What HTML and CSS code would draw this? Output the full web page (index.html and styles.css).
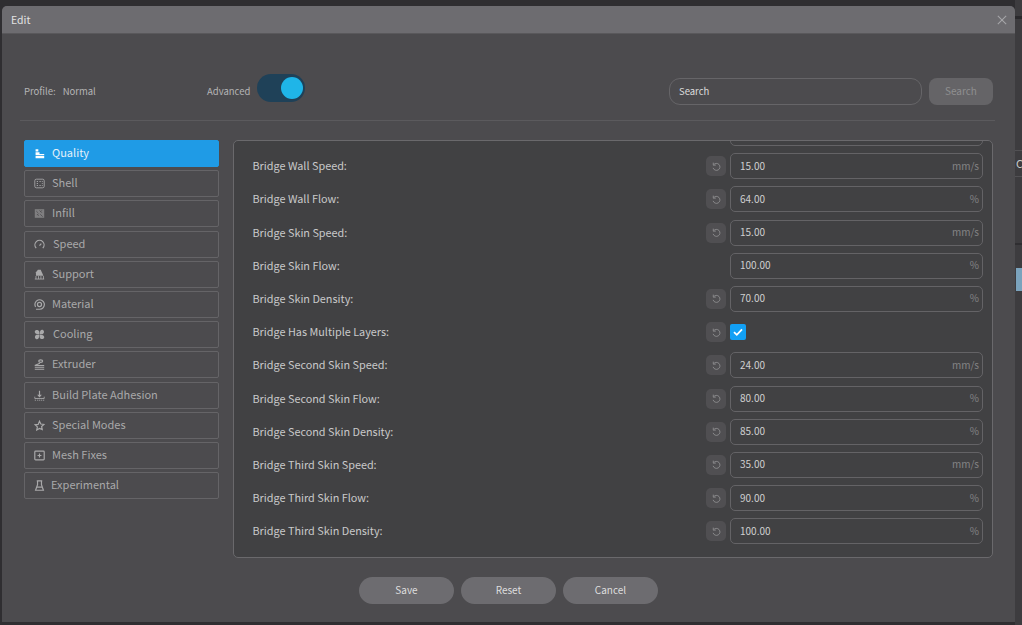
FILE: index.html
```html
<!DOCTYPE html>
<html lang="en">
<head>
<meta charset="utf-8">
<title>Edit</title>
<link rel="stylesheet" href="styles.css">
</head>
<body>
<div class="backdrop">
  <div class="side-peek"><span class="peek-letter">C</span><span class="peek-blue"></span></div>
  <div class="dialog">
    <div class="titlebar">
      <span class="title">Edit</span>
      <svg class="close" viewBox="0 0 12 12"><path d="M1 1l10 10M11 1L1 11"/></svg>
    </div>
    <div class="body">
      <div class="top">
        <div class="profile"><span>Profile:</span><span>Normal</span></div>
        <div class="advanced"><span>Advanced</span><span class="toggle"><span class="knob"></span></span></div>
        <div class="search"><div class="search-input">Search</div><div class="search-btn">Search</div></div>
      </div>
      <div class="divider"></div>
      <div class="main">
        <nav class="nav">
          <div class="nav-item active"><svg class="ico" viewBox="0 0 14 14"><path class="fill" d="M2 1.500h3.500v3H2zM2 5.500h5v2h6v1.500H2zM2 10h11v3H2z"/></svg><span>Quality</span></div>
          <div class="nav-item"><svg class="ico" viewBox="0 0 14 14"><rect class="line" x="1" y="1.500" width="12" height="11" rx="2"/><path class="dots" d="M3.500 4.500h1.500M3.500 7h1.500M3.500 9.500h1.500M7 4.500h1.500M10 4.500h1M10 7h1M10 9.500h1M7 9.500h1.500"/></svg><span>Shell</span></div>
          <div class="nav-item"><svg class="ico" viewBox="0 0 14 14"><rect class="fill dim" x="1" y="1.500" width="12" height="11"/><path class="hatch" d="M3 4l2 2M7 3l3 3M4 8l2 2M8 8l3 3M10 3l-2 2M6 7l-2 2"/></svg><span>Infill</span></div>
          <div class="nav-item"><svg class="ico" viewBox="0 0 14 14"><path class="line thick" d="M2.800 11.500a5.800 5.800 0 1 1 8.400 0"/><path class="line thick" d="M7 8.500l2.300-2.600"/></svg><span class="nudge">Speed</span></div>
          <div class="nav-item"><svg class="ico" viewBox="0 0 14 14"><path class="fill" d="M2.500 8.500V4L5 1h3.500L12 8.500z"/><path class="line" d="M1 12.800h12M2.500 9v3.800M5.800 9v3.800M8.800 9v3.800M12 9v3.800"/></svg><span>Support</span></div>
          <div class="nav-item"><svg class="ico" viewBox="0 0 14 14"><path class="line thick" d="M2.500 13h4.700A6 6 0 1 0 2 10"/><circle class="line thick" cx="7" cy="7" r="2.600"/></svg><span>Material</span></div>
          <div class="nav-item"><svg class="ico" viewBox="0 0 14 14"><path class="fill" d="M6.700 6.700C3 7 .5 5.500 1 3 2 .5 5.800.800 6.700 3.200zM7.300 6.700C7 3 8.500.5 11 1c2.500 1 2.200 4.800-.2 5.700zM7.300 7.300c3.700-.3 6.200 1.200 5.700 3.700-1 2.500-4.800 2.200-5.700-.2zM6.700 7.300c.3 3.700-1.200 6.200-3.700 5.700-2.500-1-2.200-4.800.2-5.700z"/></svg><span class="nudge">Cooling</span></div>
          <div class="nav-item"><svg class="ico" viewBox="0 0 14 14"><ellipse class="line thick" cx="8.500" cy="2.700" rx="2.500" ry="1.600"/><path class="line thick" d="M7.500 5.500L1 8.300h12M1 10.500h12M1 13h12"/></svg><span>Extruder</span></div>
          <div class="nav-item"><svg class="ico" viewBox="0 0 14 14"><path class="line thick" d="M7 1v7"/><path class="fill" d="M4 6h6L7 9.500z"/><path class="line" d="M1 8.500v2.300h12V8.500M1 13h1.500M4 13h1.500M6.500 13h1.500M9 13h1.500M11.500 13h1.500"/></svg><span>Build Plate Adhesion</span></div>
          <div class="nav-item"><svg class="ico" viewBox="0 0 14 14"><path class="line thick" d="M7 1.500l1.700 3.600 3.900.5-2.900 2.700.8 3.900L7 10.800l-3.500 1.900.8-3.900-2.900-2.700 3.900-.5z"/></svg><span>Special Modes</span></div>
          <div class="nav-item"><svg class="ico" viewBox="0 0 14 14"><rect class="line thick" x="1" y="1.500" width="12" height="11" rx="1"/><path class="line thick" d="M7 4.500v5M4.500 7h5"/></svg><span>Mesh Fixes</span></div>
          <div class="nav-item"><svg class="ico" viewBox="0 0 14 14"><path class="line thick" d="M3.500 1h7M4.500 1v5L2 13h10L9.500 6V1M3.500 9h7"/></svg><span class="nudge-l">Experimental</span></div>
        </nav>
        <section class="panel">
          <div class="scroll">
            <div class="row cut"><span class="label"></span><span class="reset blank"></span><div class="field"></div></div>
            <div class="row"><span class="label">Bridge Wall Speed:</span><button class="reset"><svg viewBox="0 0 12 12"><path d="M2.500 1.800v2.700h2.700M2.800 4.300A3.800 3.800 0 1 1 2.300 7.500"/></svg></button><div class="field"><span>15.00</span><span class="unit">mm/s</span></div></div>
            <div class="row"><span class="label">Bridge Wall Flow:</span><button class="reset"><svg viewBox="0 0 12 12"><path d="M2.500 1.800v2.700h2.700M2.800 4.300A3.800 3.800 0 1 1 2.300 7.500"/></svg></button><div class="field"><span>64.00</span><span class="unit">%</span></div></div>
            <div class="row"><span class="label">Bridge Skin Speed:</span><button class="reset"><svg viewBox="0 0 12 12"><path d="M2.500 1.800v2.700h2.700M2.800 4.300A3.800 3.800 0 1 1 2.300 7.500"/></svg></button><div class="field"><span>15.00</span><span class="unit">mm/s</span></div></div>
            <div class="row"><span class="label">Bridge Skin Flow:</span><span class="reset blank"></span><div class="field"><span>100.00</span><span class="unit">%</span></div></div>
            <div class="row"><span class="label">Bridge Skin Density:</span><button class="reset"><svg viewBox="0 0 12 12"><path d="M2.500 1.800v2.700h2.700M2.800 4.300A3.800 3.800 0 1 1 2.300 7.500"/></svg></button><div class="field"><span>70.00</span><span class="unit">%</span></div></div>
            <div class="row"><span class="label">Bridge Has Multiple Layers:</span><button class="reset"><svg viewBox="0 0 12 12"><path d="M2.500 1.800v2.700h2.700M2.800 4.300A3.800 3.800 0 1 1 2.300 7.500"/></svg></button><span class="check"><svg viewBox="0 0 16 16"><path d="M4 8.200l2.800 2.600L12 5.400"/></svg></span></div>
            <div class="row"><span class="label">Bridge Second Skin Speed:</span><button class="reset"><svg viewBox="0 0 12 12"><path d="M2.500 1.800v2.700h2.700M2.800 4.300A3.800 3.800 0 1 1 2.300 7.500"/></svg></button><div class="field"><span>24.00</span><span class="unit">mm/s</span></div></div>
            <div class="row"><span class="label">Bridge Second Skin Flow:</span><button class="reset"><svg viewBox="0 0 12 12"><path d="M2.500 1.800v2.700h2.700M2.800 4.300A3.800 3.800 0 1 1 2.300 7.500"/></svg></button><div class="field"><span>80.00</span><span class="unit">%</span></div></div>
            <div class="row"><span class="label">Bridge Second Skin Density:</span><button class="reset"><svg viewBox="0 0 12 12"><path d="M2.500 1.800v2.700h2.700M2.800 4.300A3.800 3.800 0 1 1 2.300 7.500"/></svg></button><div class="field"><span>85.00</span><span class="unit">%</span></div></div>
            <div class="row"><span class="label">Bridge Third Skin Speed:</span><button class="reset"><svg viewBox="0 0 12 12"><path d="M2.500 1.800v2.700h2.700M2.800 4.300A3.800 3.800 0 1 1 2.300 7.500"/></svg></button><div class="field"><span>35.00</span><span class="unit">mm/s</span></div></div>
            <div class="row"><span class="label">Bridge Third Skin Flow:</span><button class="reset"><svg viewBox="0 0 12 12"><path d="M2.500 1.800v2.700h2.700M2.800 4.300A3.800 3.800 0 1 1 2.300 7.500"/></svg></button><div class="field"><span>90.00</span><span class="unit">%</span></div></div>
            <div class="row"><span class="label">Bridge Third Skin Density:</span><button class="reset"><svg viewBox="0 0 12 12"><path d="M2.500 1.800v2.700h2.700M2.800 4.300A3.800 3.800 0 1 1 2.300 7.500"/></svg></button><div class="field"><span>100.00</span><span class="unit">%</span></div></div>
          </div>
        </section>
      </div>
      <div class="actions"><button class="pill">Save</button><button class="pill">Reset</button><button class="pill">Cancel</button></div>
    </div>
  </div>
</div>
</body>
</html>
```
FILE: styles.css
```css
* { box-sizing: border-box; }
html, body { margin: 0; height: 100%; }
body { background: #2f2e31; font-family: "Noto Sans CJK SC", "Noto Sans", sans-serif; overflow: hidden; }
.backdrop { position: relative; width: 1022px; height: 625px; padding: 6px 0 0 2px; }
.side-peek { position: absolute; top: 0; right: 0; width: 7px; height: 100%; background-color: #3d3c3f; background-image: linear-gradient(#2a292c, #2a292c), linear-gradient(#525154, #525154), linear-gradient(#525154, #525154), linear-gradient(#2f2e31, #2f2e31); background-repeat: no-repeat; background-size: 100% 3px, 100% 1px, 100% 1px, 100% 2px; background-position: 0 16px, 0 150px, 0 176px, 0 243px; overflow: hidden; }
.peek-letter { position: absolute; top: 155px; left: 1px; font-size: 11px; color: #c9c9c9; }
.peek-blue { position: absolute; top: 268px; left: 1px; width: 6px; height: 23px; background: #7ba3bd; }
.dialog { position: relative; width: 1013px; height: 616px; background: #4c4b4e; border-radius: 5px 5px 0 0; overflow: hidden; }
.titlebar { height: 28px; background: #6d6c70; border-bottom: 1px solid #59585b; display: flex; align-items: center; justify-content: space-between; padding: 0 8px 0 9px; }
.title { font-size: 10.5px; color: #e2e2e2; }
.close { width: 10px; height: 10px; }
.close path { stroke: #a5a5a8; stroke-width: 1.3; fill: none; }
.body { padding: 0 22px; }
.top { height: 71px; padding-top: 44px; display: flex; align-items: flex-start; }
.profile { width: 183px; display: flex; gap: 7px; font-size: 9.5px; color: #b4b4b5; line-height: 27px; }
.advanced { display: flex; align-items: flex-start; gap: 7px; font-size: 9.5px; color: #b4b4b5; height: 27px; line-height: 27px; }
.toggle { width: 48px; height: 28px; margin-top: -4px; border-radius: 14px; background: #1f4158; display: flex; align-items: center; justify-content: flex-end; padding-right: 2px; }
.knob { width: 22px; height: 22px; border-radius: 50%; background: #1fb5e8; }
.search { margin-left: auto; display: flex; gap: 7px; }
.search-input { width: 253px; height: 27px; border: 1px solid #666568; border-radius: 11px; font-size: 9.5px; color: #dddddd; line-height: 25px; padding-left: 9px; }
.search-btn { width: 64px; height: 27px; border-radius: 8px; background: #656467; color: #8f8f90; font-size: 10px; text-align: center; line-height: 26px; }
.divider { height: 1px; background: #5b5a5d; margin: 15px -2px 19px -4px; }
.main { display: flex; gap: 14px; }
.nav { width: 195px; display: flex; flex-direction: column; gap: 3.2px; }
.nav-item { height: 27px; display: flex; align-items: center; gap: 7px; padding-left: 9px; border: 1px solid #656467; border-radius: 2px; color: #a9a9aa; font-size: 11px; }
.nav-item span { padding-bottom: 3px; }
.nav-item.active { background: #1f9be6; border-color: #1f9be6; color: #e4f1fa; }
.nudge { margin-left: 1px; }
.nudge-l { margin-left: -1px; }
.ico { width: 11px; height: 11px; flex: none; }
.ico .fill { fill: currentColor; }
.ico .dim { opacity: .55; }
.ico .line { fill: none; stroke: currentColor; stroke-width: 1.1; }
.ico .thick { stroke-width: 1.5; }
.ico .dots { fill: none; stroke: currentColor; stroke-width: 1.3; }
.ico .hatch { fill: none; stroke: #4c4b4e; stroke-width: 1; }
.nav-item.active .ico { color: #fff; }
.panel { width: 760px; height: 418px; border: 1px solid #6a696c; border-radius: 5px; background: #414143; overflow: hidden; }
.scroll { margin-top: -21px; padding: 0 9px 0 18.5px; display: flex; flex-direction: column; gap: 7.2px; }
.row { height: 26px; display: flex; align-items: center; flex: none; }
.label { flex: 1; font-size: 10.85px; color: #c9c9ca; padding-bottom: 2px; }
.reset { width: 20px; height: 20px; margin-right: 4px; padding: 0; border: 0; border-radius: 5px; background: #504f52; display: flex; align-items: center; justify-content: center; flex: none; }
.reset.blank { background: none; }
.reset svg { width: 11px; height: 11px; }
.reset path { fill: none; stroke: #8c8c8e; stroke-width: 1; }
.field { width: 253px; height: 26px; border: 1px solid #646366; border-radius: 5px; display: flex; align-items: center; justify-content: space-between; padding: 0 3px 2px 9px; font-size: 10px; color: #cfcfd0; flex: none; }
.unit { color: #848485; font-size: 10px; }
.check { width: 16px; height: 16px; margin-right: 237px; border-radius: 2px; background: #12a0f5; flex: none; }
.check svg { display: block; width: 16px; height: 16px; }
.check path { fill: none; stroke: #fff; stroke-width: 1.800; }
.actions { display: flex; justify-content: center; gap: 7px; margin-top: 19px; }
.pill { width: 95px; height: 27px; border: 0; border-radius: 14px; background: #6d6c70; color: #dedede; font: 10px "Noto Sans CJK SC", "Noto Sans", sans-serif; padding: 0 0 2px; }
```
